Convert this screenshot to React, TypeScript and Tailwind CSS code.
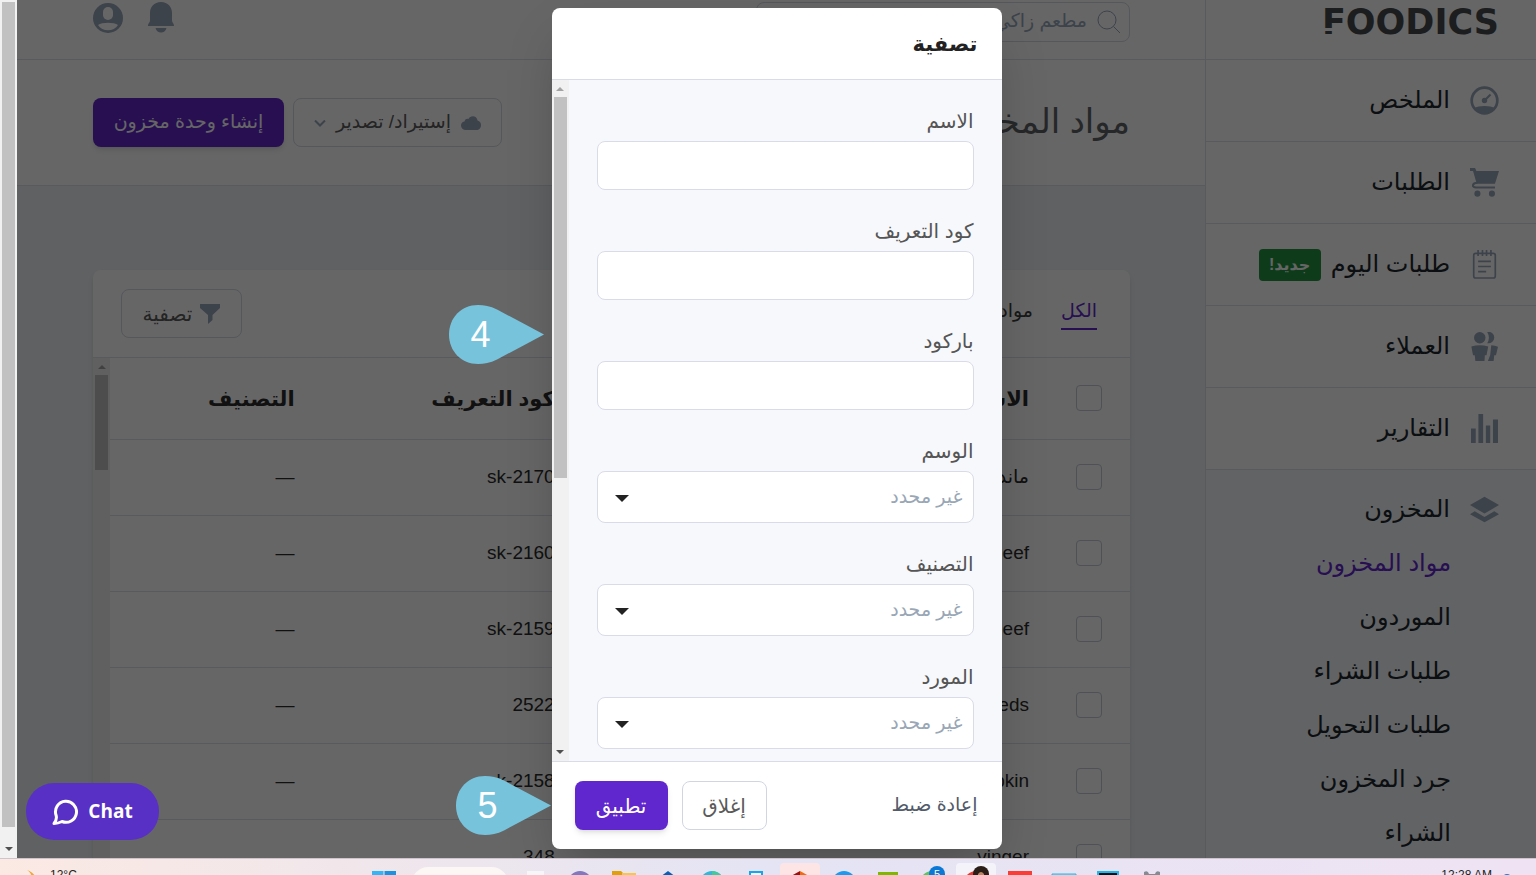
import type { ReactNode } from "react";

interface NavItem {
  label: string;
  icon: ReactNode;
  isNew?: boolean;
}

interface StockRow {
  name: string;
  code: string;
  category?: string;
}

const iconClass = "w-[29px] h-[29px] shrink-0 text-[#98a7ba]";

const GaugeIcon = () => (
  <svg viewBox="0 0 86 86" className={iconClass} fill="none" stroke="currentColor">
    <circle cx="43" cy="43" r="38" strokeWidth="8" />
    <path d="M43 43 61 25" strokeWidth="6" />
    <circle cx="43" cy="43" r="8" fill="currentColor" stroke="none" />
    <path d="M12 66C26 57 60 57 74 66A38 38 0 0 1 12 66Z" fill="currentColor" stroke="none" />
  </svg>
);

const CartIcon = () => (
  <svg viewBox="0 0 86 86" className={iconClass} fill="currentColor">
    <path d="M0 0H15L19 9H86L74 47H20L9 9H0Z" />
    <path d="M22 44C6 44 4 58 18 58H74" fill="none" stroke="currentColor" strokeWidth="6" />
    <circle cx="22" cy="76" r="9" />
    <circle cx="65" cy="76" r="9" />
  </svg>
);

const NotesIcon = () => (
  <svg viewBox="0 0 86 86" className={iconClass} fill="none" stroke="currentColor" strokeWidth="5">
    <rect x="11" y="10" width="64" height="73" rx="6" />
    <path d="M24 0V18M37 0V18M49 0V18M62 0V18" />
    <path d="M24 34H62M24 49H62M24 64H48" />
  </svg>
);

const PeopleIcon = () => (
  <svg viewBox="0 0 86 86" className={iconClass} fill="currentColor">
    <circle cx="29" cy="17" r="17" />
    <path d="M4 43Q29 35 54 43L49 69H44L43 86H16L14 69H9Z" />
    <path d="M51 0A17 17 0 1 1 51 33Q61 17 51 0Z" />
    <path d="M63 39Q74 39 83 44L77 69H72L70 86H53L60 68Z" />
  </svg>
);

const BarsIcon = () => (
  <svg viewBox="0 0 86 86" className={iconClass} fill="currentColor">
    <path d="M3 43H17V86H3ZM25 0H39V86H25ZM47 34H60V86H47ZM68 16H83V86H68Z" />
  </svg>
);

const LayersIcon = () => (
  <svg viewBox="0 0 86 80" className={iconClass} fill="currentColor">
    <path d="M43 2 86 27 43 52 0 27Z" />
    <path d="M0 54 14 45 43 62 72 45 86 54 43 78Z" />
  </svg>
);

const navItems: NavItem[] = [
  { label: "الملخص", icon: <GaugeIcon /> },
  { label: "الطلبات", icon: <CartIcon /> },
  { label: "طلبات اليوم", icon: <NotesIcon />, isNew: true },
  { label: "العملاء", icon: <PeopleIcon /> },
  { label: "التقارير", icon: <BarsIcon /> },
];

const stockLinks = ["مواد المخزون", "الموردون", "طلبات الشراء", "طلبات التحويل", "جرد المخزون", "الشراء"];

const stockRows: StockRow[] = [
  { name: "ماندرين", code: "sk-2170", category: "—" },
  { name: "beef", code: "sk-2160", category: "—" },
  { name: "beef", code: "sk-2159", category: "—" },
  { name: "seeds", code: "2522", category: "—" },
  { name: "pumpkin", code: "sk-2158", category: "—" },
  { name: "vinger", code: "348" },
];

const textFields = [
  { id: "name", label: "الاسم" },
  { id: "sku", label: "كود التعريف" },
  { id: "barcode", label: "باركود" },
];

const selectFields = [
  { id: "tag", label: "الوسم" },
  { id: "category", label: "التصنيف" },
  { id: "supplier", label: "المورد" },
];

function Sidebar() {
  return (
    <aside className="w-[331px] shrink-0 flex flex-col border-l border-[#dfe2ec] bg-[#f5f8fc] text-[#20262b]">
      <div className="h-[60px] shrink-0 pb-3.5 pr-[37px] flex items-center bg-white border-b border-[#dfe2ec]">
        <div className="relative font-['DejaVu_Sans'] font-bold text-[35px] leading-none text-[#48494b]">
          FOODICS
          <span className="absolute left-0 top-[23px] w-4 h-[3px] bg-white" />
        </div>
      </div>
      <nav className="flex flex-col">
        {navItems.map((item) => (
          <a
            key={item.label}
            href="#"
            className="h-[82px] pr-[37px] flex items-center gap-5 bg-white border-b border-[#dfe2ec] text-2xl"
          >
            {item.icon}
            <span className="pb-0.5">{item.label}</span>
            {item.isNew && (
              <span className="-ms-2.5 w-[62px] h-8 rounded flex items-center justify-center bg-[#259341] text-white text-base font-bold">
                جديد!
              </span>
            )}
          </a>
        ))}
        <a href="#" className="h-[66px] pt-3 pr-[37px] flex items-center gap-5 text-2xl">
          <LayersIcon />
          <span>المخزون</span>
        </a>
        {stockLinks.map((label, i) => (
          <a
            key={label}
            href="#"
            className={`h-[54px] pr-[85px] flex items-center text-2xl ${i === 0 ? "text-[#6126cd]" : ""}`}
          >
            {label}
          </a>
        ))}
      </nav>
    </aside>
  );
}

function TopBar() {
  return (
    <header className="h-[60px] shrink-0 pb-4 pr-[75px] pl-[76px] flex items-center justify-between bg-white border-b border-[#dfe2ec]">
      <label className="w-[374px] h-10 px-2 flex items-center gap-2.5 rounded-lg border border-[#d5d9e4]">
        <svg viewBox="0 0 24 24" className="w-6 h-6 shrink-0" fill="none" stroke="#98a7ba">
          <circle cx="10" cy="10" r="9" />
          <path d="M16.500 16.500 23 23" />
        </svg>
        <input
          aria-label="بحث"
          defaultValue="مطعم زاكي"
          className="min-w-0 flex-1 text-[19px] text-[#98a7ba] outline-none"
        />
      </label>
      <div className="pb-2 flex items-center gap-6">
        <button aria-label="الإشعارات">
          <svg viewBox="0 0 28 32" className="w-7 h-8" fill="#98a7ba">
            <path d="M14 0C7 0 3 5 3 11V18C3 21 1 21 1 24H27C27 21 25 21 25 18V11C25 5 21 0 14 0Z" />
            <path d="M8.500 26H19.500C18 32 10 32 8.500 26Z" />
          </svg>
        </button>
        <button aria-label="الحساب">
          <svg viewBox="0 0 30 30" className="w-[30px] h-[30px]">
            <circle cx="15" cy="15" r="15" fill="#98a7ba" />
            <rect x="10" y="4" width="10" height="13" rx="5" fill="#fff" />
            <path d="M5 22C9 19 21 19 25 22C21 29 9 29 5 22Z" fill="#fff" />
          </svg>
        </button>
      </div>
    </header>
  );
}

function PageHeader() {
  return (
    <div className="h-[126px] shrink-0 pr-[75px] pl-[76px] flex items-center justify-between bg-white border-b border-[#dfe2ec]">
      <h1 className="pb-0.5 text-[34px] text-[#5f6266]">مواد المخزون</h1>
      <div className="flex gap-[9px]">
        <button className="w-[209px] h-[49px] flex items-center justify-center gap-2.5 rounded-lg border border-[#d5d9e4] text-[19px] text-[#5a5a5a]">
          <svg viewBox="0 0 20 14" className="w-5 h-3.5" fill="#98a7ba">
            <path d="M5 14C2 14 0 12 0 9.500 0 7 2 5.500 3.500 5.500 4 3 6 2.500 7.500 3 9-1 16-1 16.500 4.500 19 5 20 7 20 9 20 12 18 14 15.500 14Z" />
          </svg>
          إستيراد/ تصدير
          <svg viewBox="0 0 12 8" className="w-3 h-2" fill="none" stroke="#98a7ba" strokeWidth="2">
            <path d="M1 1.500 6 6.500 11 1.500" />
          </svg>
        </button>
        <button className="w-[191px] h-[49px] rounded-lg bg-[#6126cd] text-white text-[19px] shadow-md">
          إنشاء وحدة مخزون
        </button>
      </div>
    </div>
  );
}

function StockTable() {
  return (
    <section className="mr-[75px] ml-[76px] mt-[84px] flex-1 min-h-0 flex flex-col bg-white rounded-t-lg shadow-md overflow-hidden">
      <div className="h-[88px] shrink-0 pr-[33px] pl-7 flex items-center justify-between border-b border-[#dfe2ec]">
        <div className="flex gap-7 text-[19px] text-[#3d3d3d]">
          <a href="#" className="pb-0.5 border-b-2 border-[#6126cd] text-[#6126cd]">الكل</a>
          <a href="#">مواد محذوفة</a>
        </div>
        <button className="w-[121px] h-[49px] flex items-center justify-center gap-2 rounded-lg border border-[#d5d9e4] text-xl text-[#5a5a5a]">
          <svg viewBox="0 0 20 20" className="w-5 h-5" fill="#98a7ba">
            <path d="M0 0H20V4L12.500 11V16L8 20V11L0 4Z" />
          </svg>
          تصفية
        </button>
      </div>
      <div className="flex-1 min-h-0 flex overflow-hidden">
        <div className="flex-1 min-w-0">
          <table className="w-full table-fixed text-[19px] text-[#2b2b2b]">
            <thead>
              <tr className="h-[81px] border-b border-[#dfe2ec] text-right text-[21px] text-[#2b2b2b]">
                <th className="w-[101px] pr-7">
                  <input type="checkbox" aria-label="تحديد الكل" className="block appearance-none w-[26px] h-[26px] rounded border border-[#c5cad6]" />
                </th>
                <th className="w-[46.5%]">الاسم</th>
                <th className="w-[25.5%]">كود التعريف</th>
                <th>التصنيف</th>
              </tr>
            </thead>
            <tbody>
              {stockRows.map((row) => (
                <tr key={row.code} className="h-[76px] border-b border-[#dfe2ec]">
                  <td className="pr-7">
                    <input type="checkbox" aria-label={row.name} className="block appearance-none w-[26px] h-[26px] rounded border border-[#c5cad6]" />
                  </td>
                  <td>{row.name}</td>
                  <td>{row.code}</td>
                  <td>{row.category}</td>
                </tr>
              ))}
            </tbody>
          </table>
        </div>
        <div className="w-[17px] shrink-0 px-0.5 flex flex-col items-center bg-[#f1f1f1]">
          <span className="mt-[7px] border-x-4 border-b-4 border-x-transparent border-b-[#a3a3a3]" />
          <span className="mt-1.5 w-full h-[95px] bg-[#c1c1c1]" />
        </div>
      </div>
    </section>
  );
}

function FilterModal() {
  return (
    <div role="dialog" aria-label="تصفية" className="w-[450px] h-full flex flex-col bg-white rounded-lg shadow-2xl overflow-hidden">
      <div className="h-[72px] shrink-0 px-6 flex items-center border-b border-[#d9dce8]">
        <h2 className="text-[21px] font-bold text-[#222]">تصفية</h2>
      </div>
      <div className="flex-1 min-h-0 flex bg-[#f7f8fc]">
        <form className="flex-1 min-w-0 px-7 pt-[26px] flex flex-col gap-[26px] overflow-hidden text-[19px] text-[#555]">
          {textFields.map((f) => (
            <div key={f.id} className="shrink-0">
              <label htmlFor={f.id} className="block h-[30px] mb-[5px] text-xl leading-[30px]">{f.label}</label>
              <input id={f.id} type="text" className="block w-full h-[49px] px-2.5 rounded-lg border border-[#d9dce8] bg-white" />
            </div>
          ))}
          {selectFields.map((f) => (
            <div key={f.id} className="shrink-0">
              <label htmlFor={f.id} className="block h-[30px] mb-[5px] text-xl leading-[30px]">{f.label}</label>
              <div className="relative">
                <select id={f.id} className="block appearance-none w-full h-[52px] px-2.5 rounded-lg border border-[#d9dce8] bg-white text-[#98a6b5]">
                  <option>غير محدد</option>
                </select>
                <span className="absolute left-[18px] top-6 border-x-[7px] border-t-[7px] border-x-transparent border-t-[#222] pointer-events-none" />
              </div>
            </div>
          ))}
        </form>
        <div className="w-[17px] shrink-0 px-0.5 flex flex-col items-center bg-[#f1f1f1]">
          <span className="mt-[7px] border-x-4 border-b-4 border-x-transparent border-b-[#a3a3a3]" />
          <span className="mt-1.5 w-full h-[56%] bg-[#c1c1c1]" />
          <span className="mt-auto mb-[7px] border-x-4 border-t-4 border-x-transparent border-t-[#505050]" />
        </div>
      </div>
      <div className="h-[88px] shrink-0 pr-6 pl-[23px] flex items-center gap-3.5 border-t border-[#d9dce8] text-[19px]">
        <button className="ml-auto text-[#525b69]">إعادة ضبط</button>
        <button className="w-[85px] h-[49px] rounded-lg border border-[#cfd6e2] text-xl text-[#5a5a5a]">إغلاق</button>
        <button className="w-[93px] h-[49px] rounded-lg bg-[#5f27cd] text-xl text-white shadow-md">تطبيق</button>
      </div>
    </div>
  );
}

function StepPin({ step, className }: { step: number; className: string }) {
  return (
    <div className={`absolute w-[95px] h-[59px] ${className}`}>
      <svg viewBox="0 0 95 59" className="w-full h-full" fill="#78c3dc">
        <path d="M95 29.500 48 4.500C41 1 35 0 29 0 12 0 0 13 0 29.500S12 59 29 59C35 59 41 58 48 54.500Z" />
      </svg>
      <span className="absolute inset-y-0 left-0 w-16 flex items-center justify-center text-4xl text-white">{step}</span>
    </div>
  );
}

function TaskCell({ children, active }: { children: ReactNode; active?: string }) {
  return (
    <div className="w-11 h-12 flex items-center justify-center">
      <div className={`w-10 h-10 rounded flex items-center justify-center ${active ?? ""}`}>
        <svg viewBox="0 0 24 24" className="w-6 h-6 overflow-visible">{children}</svg>
      </div>
    </div>
  );
}

function Taskbar() {
  return (
    <footer dir="ltr" className="h-[17px] shrink-0 overflow-hidden border-t border-[#cfc4cc] bg-linear-to-r from-[#fbe9e3] via-[#e4e4f4] to-[#efe3f3]">
      <div className="h-12 grid grid-cols-[1fr_auto_1fr] text-xs leading-4 text-[#222]">
        <div className="pl-6 pt-2 flex gap-3">
          <svg viewBox="0 0 14 24" className="w-3.5 h-6">
            <path d="M3 3C9 7 10 14 4 20 14 20 16 8 3 3Z" fill="#f0a830" />
          </svg>
          <span>12°C</span>
        </div>
        <div className="flex items-center">
          <TaskCell>
            <path d="M0 0H11.500V11.500H0Z" fill="#35b5f5" />
            <path d="M12.500 0H24V11.500H12.500ZM0 12.500H11.500V24H0ZM12.500 12.500H24V24H12.500Z" fill="#1c92e0" />
          </TaskCell>
          <div className="w-24 h-8 mx-1.5 rounded-full bg-[#fcf6f5]" />
          <TaskCell><path d="M3 0H20V20H3Z" fill="#f6f6f8" /></TaskCell>
          <TaskCell><circle cx="12" cy="12" r="12" fill="#8377bd" /></TaskCell>
          <TaskCell>
            <path d="M0 0H9L11 2H24V22H0Z" fill="#e0a00c" />
            <path d="M10 2H24V22H10Z" fill="#f7c748" />
          </TaskCell>
          <TaskCell><path d="M12 0 24 9V24H0V9Z" fill="#0a5fb4" /></TaskCell>
          <TaskCell>
            <circle cx="12" cy="12" r="12" fill="#2fb8d8" />
            <path d="M12 0A12 12 0 0 1 24 12H12Z" fill="#41c9a0" />
          </TaskCell>
          <TaskCell><rect x="6" y="1" width="12" height="22" fill="#e9f6fd" stroke="#15a7ea" strokeWidth="2" /></TaskCell>
          <TaskCell active="bg-[#fde5e5]">
            <path d="M12 0 3 5V20H12Z" fill="#9c1010" />
            <path d="M12 0 21 5V20H12Z" fill="#f06a10" />
          </TaskCell>
          <TaskCell><circle cx="12" cy="12" r="12" fill="#1a9bf0" /></TaskCell>
          <TaskCell><path d="M2 1H22V22H2Z" fill="#7fb800" /></TaskCell>
          <TaskCell>
            <circle cx="12" cy="12" r="12" fill="#56c563" />
            <circle cx="17" cy="3" r="8" fill="#0a78d4" />
            <text x="17" y="7" fontSize="11" textAnchor="middle" fill="#fff">5</text>
          </TaskCell>
          <TaskCell active="bg-[#f5f3fa]">
            <circle cx="12" cy="12" r="12" fill="#e43c34" />
            <circle cx="17" cy="3" r="8" fill="#2b1d18" />
            <path d="M14 3Q17-1 20 3V9H14Z" fill="#b98a63" />
          </TaskCell>
          <TaskCell><path d="M0 0H24V24H0Z" fill="#fb3d33" /></TaskCell>
          <TaskCell><path d="M0 3H24V22H0Z" fill="#7fdcf8" stroke="#25b8ec" /></TaskCell>
          <TaskCell><path d="M2 1H22V23H2Z" fill="#03171f" stroke="#21b7ea" strokeWidth="2" /></TaskCell>
          <TaskCell><path d="M4 1Q8-1 9 3H15Q16-1 20 1V20H4Z" fill="#848b93" /></TaskCell>
        </div>
        <div className="pr-6 pt-2 flex justify-end gap-2.5">
          <span>12:28 AM</span>
          <svg viewBox="0 0 10 24" className="w-2.5 h-6"><circle cx="5" cy="12" r="5" fill="#1f78d8" /></svg>
        </div>
      </div>
    </footer>
  );
}

export default function App() {
  return (
    <div
      dir="rtl"
      lang="ar"
      className="h-screen flex flex-col overflow-hidden bg-white font-['Liberation_Sans','DejaVu_Sans',sans-serif]"
    >
      <div className="flex-1 min-h-0 flex">
        <div className="relative flex-1 min-w-0 flex overflow-hidden">
          <Sidebar />
          <main className="flex-1 min-w-0 flex flex-col bg-[#eef2f7]">
            <TopBar />
            <PageHeader />
            <StockTable />
          </main>
          <div className="absolute inset-0 pt-2 pb-[9px] flex justify-center bg-black/60">
            <div className="relative h-full">
              <FilterModal />
              <StepPin step={4} className="-left-[103px] top-[297px]" />
              <StepPin step={5} className="-left-24 bottom-3.5" />
            </div>
          </div>
          <button
            dir="ltr"
            className="absolute left-[9px] bottom-[18px] w-[133px] h-[57px] rounded-[28px] flex items-center justify-center gap-2.5 bg-[#5830c5] text-white font-['Open_Sans'] font-bold text-[19px]"
          >
            <svg viewBox="0 0 26 28" className="w-[26px] h-7" fill="none" stroke="#fff" strokeWidth="3">
              <path d="M4 17A10.500 10.500 0 1 1 10 23.500C8 24.500 5 25.500 2 25.500 4 23 5 20 4 17Z" strokeLinejoin="round" />
            </svg>
            Chat
          </button>
        </div>
        <div className="w-[17px] shrink-0 px-0.5 pt-0.5 flex flex-col items-center bg-[#f1f1f1]">
          <span className="w-full flex-1 bg-[#c1c1c1]" />
          <span className="mt-5 mb-[7px] border-x-4 border-t-4 border-x-transparent border-t-[#505050]" />
        </div>
      </div>
      <Taskbar />
    </div>
  );
}
